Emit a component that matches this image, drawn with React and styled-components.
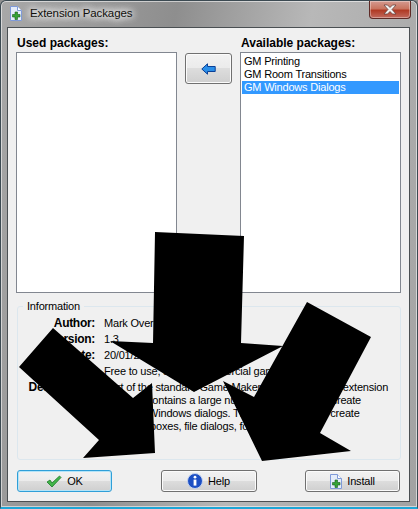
import React from 'react';
import styled, { createGlobalStyle } from 'styled-components';

const GlobalStyle = createGlobalStyle`
  html, body {
    margin: 0;
    padding: 0;
    background: #8f8f8f;
  }
  * {
    box-sizing: border-box;
  }
`;

const Frame = styled.div`
  position: relative;
  width: 418px;
  height: 509px;
  overflow: hidden;
  padding: 0 7px 5px 6px;
  display: flex;
  flex-direction: column;
  border: 1px solid #3c4a52;
  border-bottom: 2px solid #1fa6d6;
  border-radius: 6px 6px 0 0;
  box-shadow: inset 0 0 0 1px rgba(255, 255, 255, 0.55);
  background: linear-gradient(100deg, #a8a8a8 0%, #8e8e8e 35%, #b8b8b8 62%, #a2a2a2 100%);
  font-family: 'Liberation Sans', Arial, sans-serif;
  font-size: 11px;
  letter-spacing: -0.2px;
  color: #000;
`;

const TitleBar = styled.div`
  height: 26px;
  flex: none;
  display: flex;
  align-items: center;
  gap: 8px;
  padding: 0 0 2px 3px;
`;

const TitleText = styled.span`
  font-size: 11.5px;
  letter-spacing: -0.1px;
  color: #10100c;
  text-shadow: 0 0 6px #fff, 0 0 8px #fff, 0 0 10px #fff;
`;

const CloseButton = styled.div`
  position: absolute;
  top: 0;
  right: 6px;
  width: 42px;
  height: 18px;
  display: flex;
  align-items: center;
  justify-content: center;
  border: 1px solid #5e2a26;
  border-top: 0;
  border-radius: 0 0 4px 4px;
  background: linear-gradient(#d49a90 0%, #c8745f 45%, #b03a24 55%, #c26a5e 100%);
  box-shadow: inset 0 0 0 1px rgba(255, 255, 255, 0.35);
`;

const Client = styled.div`
  flex: 1;
  display: flex;
  flex-direction: column;
  padding: 8px 8px 9px;
  background: #f0f0f0;
  border: 1px solid #4a4f52;
`;

const Lists = styled.div`
  display: flex;
  height: 257px;
  flex: none;
`;

const ListColumn = styled.div`
  width: ${(props) => props.$width}px;
  flex: none;
  display: flex;
  flex-direction: column;
  gap: 2px;
`;

const ListLabel = styled.div`
  font-weight: 700;
  font-size: 12px;
  line-height: 14px;
  margin-left: 1px;
  letter-spacing: 0;
`;

const ListBox = styled.div`
  flex: 1;
  padding: 2px 1px;
  background: #fff;
  border: 1px solid #828790;
`;

const ListItem = styled.div`
  height: 13px;
  line-height: 13px;
  padding-left: 2px;
  background: ${(props) => (props.$selected ? '#3399ff' : 'transparent')};
  color: ${(props) => (props.$selected ? '#fff' : '#000')};
`;

const Middle = styled.div`
  flex: 1;
  display: flex;
  justify-content: center;
  padding-top: 17px;
`;

const Button = styled.div`
  width: ${(props) => props.$width}px;
  height: ${(props) => props.$height}px;
  display: flex;
  align-items: center;
  justify-content: center;
  gap: 5px;
  border-radius: 3px;
  border: 1px solid ${(props) => (props.$focused ? '#2f9fd8' : '#707070')};
  box-shadow: inset 0 0 0 1px ${(props) => (props.$focused ? '#b4e4f8' : '#fbfbfb')};
  background: linear-gradient(#f2f2f2 0%, #ebebeb 49%, #dddddd 50%, #cfcfcf 100%);
`;

const InfoGroup = styled.fieldset`
  margin: 7px 0 0 1px;
  padding: 0;
  width: 384px;
  height: 160px;
  flex: none;
  border: 1px solid #dce7ee;
  border-radius: 3px;
  display: block;
`;

const InfoLegend = styled.legend`
  margin-left: 5px;
  padding: 0 4px;
  line-height: 13px;
`;

const InfoRows = styled.div`
  display: grid;
  grid-template-columns: 77px 1fr;
  column-gap: 9px;
  grid-auto-rows: 16px;
  padding: 2px 6px 0 0;
`;

const InfoLabel = styled.div`
  font-weight: 700;
  font-size: 12px;
  letter-spacing: -0.3px;
  text-align: right;
  line-height: 16px;
`;

const InfoValue = styled.div`
  line-height: 16px;
`;

const DescriptionValue = styled.div`
  line-height: 13px;
  padding-top: 2px;
  white-space: pre-line;
`;

const Footer = styled.div`
  margin-top: 10px;
  margin-left: 1px;
  width: 383px;
  display: flex;
  justify-content: space-between;
`;

const Overlay = styled.svg`
  position: absolute;
  top: -1px;
  left: -1px;
  width: 418px;
  height: 509px;
  pointer-events: none;
`;

const DocIcon = () => (
  <svg width="12" height="15" viewBox="0 0 12 15">
    <path d="M.5 .5H7.5L11.5 4.5V14.5H.5Z" fill="#e4ecfa" stroke="#7f9ad8" />
    <path d="M7.5 .5V4.5H11.5" fill="#fff" stroke="#7f9ad8" />
    <path d="M5 6H7.5V8.5H10V11H7.5V13.5H5V11H2.5V8.5H5Z" fill="#36a336" stroke="#17601c" strokeWidth=".6" />
  </svg>
);

const OkIcon = () => (
  <svg width="16" height="13" viewBox="0 0 16 13">
    <path d="M1 7L4 5L6 8L13.5 1L15 2.5L6 12Z" fill="#43b54a" stroke="#1c7a28" strokeWidth=".8" />
  </svg>
);

const HelpIcon = () => (
  <svg width="16" height="16" viewBox="0 0 16 16">
    <circle cx="8" cy="8" r="7.5" fill="#1c4fc4" stroke="#c4d2ee" />
    <circle cx="8" cy="4.2" r="1.4" fill="#fff" />
    <rect x="6.6" y="6.6" width="2.8" height="6" fill="#fff" />
  </svg>
);

const LeftArrowIcon = () => (
  <svg width="15" height="12" viewBox="0 0 15 12">
    <path d="M.8 6L6.5 .8V3.5H14.2V8.5H6.5V11.2Z" fill="#2a8ee8" stroke="#0a3f96" />
  </svg>
);

const CloseGlyph = () => (
  <svg width="14" height="11" viewBox="0 0 14 11">
    <path d="M1 1H4.5L7 3.5L9.5 1H13L9 5.5L13 10H9.5L7 7.5L4.5 10H1L5 5.5Z" fill="#f1f1f1" stroke="#5c3a36" strokeWidth=".7" />
  </svg>
);

const PACKAGES = ['GM Printing', 'GM Room Transitions', 'GM Windows Dialogs'];

const INFO = [
  ['Author:', 'Mark Overmars'],
  ['Version:', '1.3'],
  ['Date:', '20/01/2009'],
  ['', 'Free to use, also in commercial games.'],
];

export default function App() {
  return (
    <>
      <GlobalStyle />
      <Frame>
        <TitleBar>
          <DocIcon />
          <TitleText>Extension Packages</TitleText>
        </TitleBar>
        <CloseButton>
          <CloseGlyph />
        </CloseButton>
        <Client>
          <Lists>
            <ListColumn $width={161}>
              <ListLabel>Used packages:</ListLabel>
              <ListBox />
            </ListColumn>
            <Middle>
              <Button $width={47} $height={31}>
                <LeftArrowIcon />
              </Button>
            </Middle>
            <ListColumn $width={161}>
              <ListLabel>Available packages:</ListLabel>
              <ListBox>
                {PACKAGES.map((name, i) => (
                  <ListItem key={name} $selected={i === 2}>{name}</ListItem>
                ))}
              </ListBox>
            </ListColumn>
          </Lists>
          <InfoGroup>
            <InfoLegend>Information</InfoLegend>
            <InfoRows>
              {INFO.map(([label, value]) => (
                <React.Fragment key={value}>
                  <InfoLabel>{label}</InfoLabel>
                  <InfoValue>{value}</InfoValue>
                </React.Fragment>
              ))}
              <InfoLabel>Description:</InfoLabel>
              <DescriptionValue>
                {'Part of the standard Game Maker extensions. This extension\npackage contains a large number of functions to create\nstandard Windows dialogs. This lets you quickly create\nmessage boxes, file dialogs, forms, and more.'}
              </DescriptionValue>
            </InfoRows>
          </InfoGroup>
          <Footer>
            <Button $width={95} $height={22} $focused>
              <OkIcon />
              OK
            </Button>
            <Button $width={96} $height={22}>
              <HelpIcon />
              Help
            </Button>
            <Button $width={95} $height={22}>
              <DocIcon />
              Install
            </Button>
          </Footer>
        </Client>
        <Overlay viewBox="0 0 418 509">
          <polygon points="155,232 244,236 241,343 283,346 194,392 110,341 153,343" fill="#000" />
          <polygon points="53,328 133,398 152,383 155,453 83,458 99,440 19,367" fill="#000" />
          <polygon points="307,302 371,337 320,433 351,451 262,461 223,381 254,397" fill="#000" />
        </Overlay>
      </Frame>
    </>
  );
}
